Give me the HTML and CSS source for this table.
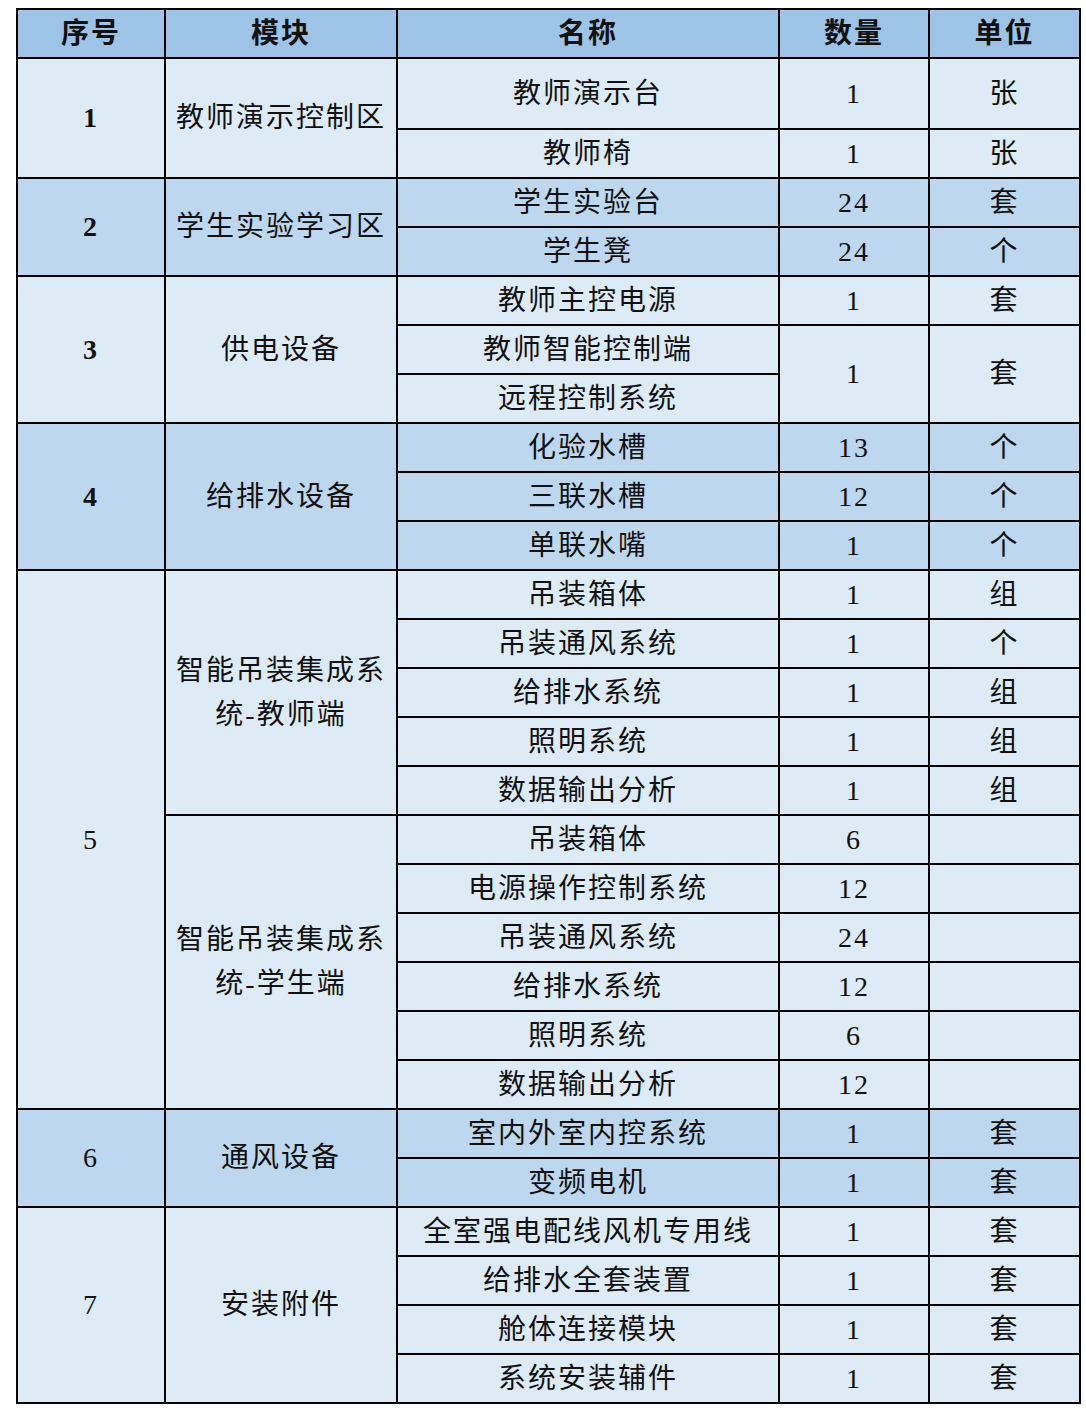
FILE: index.html
```html
<!DOCTYPE html>
<html lang="zh-CN">
<head>
<meta charset="utf-8">
<title>设备清单</title>
<link rel="stylesheet" href="styles.css">
</head>
<body>
<table class="list">
  <colgroup>
    <col class="c-no"><col class="c-mod"><col class="c-name"><col class="c-qty"><col class="c-unit">
  </colgroup>
  <thead>
    <tr class="head"><th>序号</th><th>模块</th><th>名称</th><th>数量</th><th>单位</th></tr>
  </thead>
  <tbody class="light">
    <tr class="tall"><td rowspan="2" class="no bold">1</td><td rowspan="2" class="mod">教师演示控制区</td><td>教师演示台</td><td>1</td><td>张</td></tr>
    <tr><td>教师椅</td><td>1</td><td>张</td></tr>
  </tbody>
  <tbody class="mid">
    <tr><td rowspan="2" class="no bold">2</td><td rowspan="2" class="mod">学生实验学习区</td><td>学生实验台</td><td>24</td><td>套</td></tr>
    <tr><td>学生凳</td><td>24</td><td>个</td></tr>
  </tbody>
  <tbody class="light">
    <tr><td rowspan="3" class="no bold">3</td><td rowspan="3" class="mod">供电设备</td><td>教师主控电源</td><td>1</td><td>套</td></tr>
    <tr><td>教师智能控制端</td><td rowspan="2">1</td><td rowspan="2">套</td></tr>
    <tr><td>远程控制系统</td></tr>
  </tbody>
  <tbody class="mid">
    <tr><td rowspan="3" class="no bold">4</td><td rowspan="3" class="mod">给排水设备</td><td>化验水槽</td><td>13</td><td>个</td></tr>
    <tr><td>三联水槽</td><td>12</td><td>个</td></tr>
    <tr><td>单联水嘴</td><td>1</td><td>个</td></tr>
  </tbody>
  <tbody class="light">
    <tr><td rowspan="11" class="no">5</td><td rowspan="5" class="mod">智能吊装集成系统-教师端</td><td>吊装箱体</td><td>1</td><td>组</td></tr>
    <tr><td>吊装通风系统</td><td>1</td><td>个</td></tr>
    <tr><td>给排水系统</td><td>1</td><td>组</td></tr>
    <tr><td>照明系统</td><td>1</td><td>组</td></tr>
    <tr><td>数据输出分析</td><td>1</td><td>组</td></tr>
    <tr><td rowspan="6" class="mod">智能吊装集成系统-学生端</td><td>吊装箱体</td><td>6</td><td></td></tr>
    <tr><td>电源操作控制系统</td><td>12</td><td></td></tr>
    <tr><td>吊装通风系统</td><td>24</td><td></td></tr>
    <tr><td>给排水系统</td><td>12</td><td></td></tr>
    <tr><td>照明系统</td><td>6</td><td></td></tr>
    <tr><td>数据输出分析</td><td>12</td><td></td></tr>
  </tbody>
  <tbody class="mid">
    <tr><td rowspan="2" class="no">6</td><td rowspan="2" class="mod">通风设备</td><td>室内外室内控系统</td><td>1</td><td>套</td></tr>
    <tr><td>变频电机</td><td>1</td><td>套</td></tr>
  </tbody>
  <tbody class="light">
    <tr><td rowspan="4" class="no">7</td><td rowspan="4" class="mod">安装附件</td><td>全室强电配线风机专用线</td><td>1</td><td>套</td></tr>
    <tr><td>给排水全套装置</td><td>1</td><td>套</td></tr>
    <tr><td>舱体连接模块</td><td>1</td><td>套</td></tr>
    <tr><td>系统安装辅件</td><td>1</td><td>套</td></tr>
  </tbody>
</table>
</body>
</html>
```
FILE: styles.css
```css
html, body {
  background: #ffffff;
}
body {
  margin: 8px 0 0 16px;
}
.list {
  border-collapse: collapse;
  table-layout: fixed;
  width: 1063px;
  font-family: "Liberation Serif", "Noto Sans CJK SC", serif;
  font-size: 28px;
  color: #111111;
  border: 2px solid #000;
}
.c-no { width: 148px; }
.c-mod { width: 232px; }
.c-name { width: 382px; }
.c-qty { width: 150px; }
.c-unit { width: 151px; }
.list th,
.list td {
  border: 2px solid #000;
  padding: 0;
  text-align: center;
  vertical-align: middle;
  letter-spacing: 2px;
  line-height: 44px;
}
.list tr {
  height: 49px;
}
.list tr.tall {
  height: 71px;
}
.head th {
  background: #9dc3e6;
  font-weight: 700;
}
.light td {
  background: #ddebf7;
}
.mid td {
  background: #bdd7ee;
}
.bold {
  font-weight: 700;
}
.mod {
  padding: 0 1px;
}
```
